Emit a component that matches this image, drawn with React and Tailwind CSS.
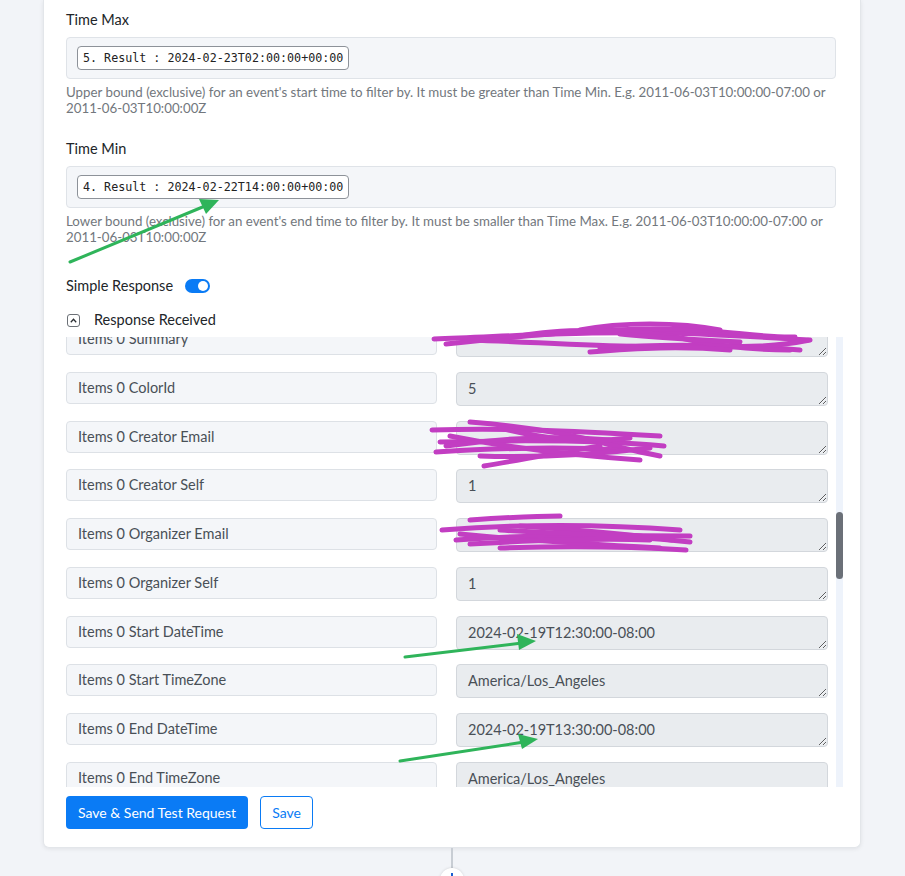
import React, { useLayoutEffect, useRef } from 'react';

const font = { fontFamily: 'Lato, "Noto Sans", sans-serif' };

const responseRows = [
    ['Items 0 Summary', ''],
    ['Items 0 ColorId', '5'],
    ['Items 0 Creator Email', ''],
    ['Items 0 Creator Self', '1'],
    ['Items 0 Organizer Email', ''],
    ['Items 0 Organizer Self', '1'],
    ['Items 0 Start DateTime', '2024-02-19T12:30:00-08:00'],
    ['Items 0 Start TimeZone', 'America/Los_Angeles'],
    ['Items 0 End DateTime', '2024-02-19T13:30:00-08:00'],
    ['Items 0 End TimeZone', 'America/Los_Angeles'],
    ['Items 0 ICalUID', ''],
    ['Items 0 Sequence', '0'],
];

function TimeField({ label, token, help, className = '' }) {
    return (
        <div className={className}>
            <div className="text-[14.5px] leading-5 text-[#212529]">{label}</div>
            <div className="mt-[7px] h-[42px] rounded border border-[#dfe3e8] bg-[#f4f6f9] pl-[10px] flex items-center">
                <span
                    className="h-[24px] px-[5px] rounded-[4px] border border-[#8d9299] bg-white text-[11.7px] leading-[22px] text-[#222]"
                    style={{ fontFamily: '"DejaVu Sans Mono", monospace' }}
                >
                    {token}
                </span>
            </div>
            <p className="mt-[5px] text-[13.3px] leading-4 text-[#72777d]">{help}</p>
        </div>
    );
}

function ResponseRow({ name, value }) {
    return (
        <div className="flex items-start gap-[19px]">
            <div className="w-[371px] h-[32px] shrink-0 rounded border border-[#dde1e6] bg-[#f4f6f9] pl-[11px] text-[14.5px] leading-[30px] text-[#495057]">
                {name}
            </div>
            <textarea
                readOnly
                rows={1}
                value={value}
                className="w-[372px] h-[34px] shrink-0 rounded border border-[#d3d7dc] bg-[#e9ecef] pl-[11px] pt-[6px] text-[14.5px] leading-5 text-[#495057] overflow-hidden outline-none"
                style={font}
            />
        </div>
    );
}

// hand-drawn markup laid over the form
function Annotations() {
    const green = '#2fb45a';
    const pink = '#c23ec2';
    return (
        <svg className="absolute inset-0 pointer-events-none" width="905" height="876" viewBox="0 0 905 876">
            <g stroke={green} strokeWidth="3" strokeLinecap="round" fill="none">
                <line x1="70" y1="262" x2="205" y2="206" />
                <line x1="405" y1="657" x2="522" y2="643" />
                <line x1="400" y1="761" x2="524" y2="742" />
            </g>
            <g fill={green}>
                <polygon points="219,200 199,199 206,214" />
                <polygon points="536,641 517,634 519,650" />
                <polygon points="538,739 518,734 522,749" />
            </g>
            <g stroke={pink} strokeWidth="5" strokeLinecap="round" strokeLinejoin="round" fill="none">
                <path d="M434 339 C520 336 600 330 700 334 C740 336 780 338 808 340" />
                <path d="M446 344 C540 334 620 326 700 330 C740 333 770 338 795 337" />
                <path d="M600 348 C660 344 720 344 800 350 M580 330 C620 322 680 322 720 330" />
                <path d="M470 340 C560 343 640 350 760 346 C780 345 800 342 810 340" />
                <path d="M520 336 C560 328 640 328 690 340 C720 346 760 350 790 350" />
                <path d="M590 352 C640 348 680 346 730 350 M620 334 C660 338 700 340 740 342" />
            </g>
            <g stroke={pink} strokeWidth="5" strokeLinecap="round" strokeLinejoin="round" fill="none">
                <path d="M432 430 C500 428 560 430 660 436 M440 442 C520 440 600 440 664 446" />
                <path d="M470 422 C520 426 560 432 600 442 C620 448 640 452 660 456" />
                <path d="M436 452 C500 448 560 446 620 450 M484 466 C520 460 560 452 600 446" />
                <path d="M450 436 C520 450 580 456 640 460 M500 428 C540 438 580 444 630 438" />
                <path d="M446 446 C500 438 560 436 610 440 M480 456 C540 458 600 454 650 448" />
            </g>
            <g stroke={pink} strokeWidth="5" strokeLinecap="round" strokeLinejoin="round" fill="none">
                <path d="M442 530 C520 524 600 524 680 530 M470 520 C500 518 530 516 560 516" />
                <path d="M456 540 C540 534 620 534 690 542 M500 548 C560 546 620 546 686 550" />
                <path d="M460 534 C520 540 580 544 660 548 M520 526 C580 530 630 534 672 540" />
                <path d="M470 544 C540 540 600 538 650 540 M500 530 C560 534 620 536 690 536" />
            </g>
        </svg>
    );
}

export default function App() {
    const listRef = useRef(null);

    useLayoutEffect(() => {
        if (listRef.current) listRef.current.scrollTop = 14;
    }, []);

    return (
        <div className="relative h-[876px] overflow-hidden bg-[#f2f4f8]" style={font}>
            <div className="ml-[43px] w-[818px] rounded-b-md border border-t-0 border-[#e3e6ea] bg-white shadow-[0_1px_4px_rgba(0,0,0,0.08)] pl-[22px] pr-[17px] pt-[10px] pb-[18px]">
                <div className="w-[770px]">
                    <TimeField
                        label="Time Max"
                        token="5. Result : 2024-02-23T02:00:00+00:00"
                        help="Upper bound (exclusive) for an event's start time to filter by. It must be greater than Time Min. E.g. 2011-06-03T10:00:00-07:00 or 2011-06-03T10:00:00Z"
                    />
                    <TimeField
                        className="mt-[23px]"
                        label="Time Min"
                        token="4. Result : 2024-02-22T14:00:00+00:00"
                        help="Lower bound (exclusive) for an event's end time to filter by. It must be smaller than Time Max. E.g. 2011-06-03T10:00:00-07:00 or 2011-06-03T10:00:00Z"
                    />

                    {/* Simple Response toggle */}
                    <div className="mt-[31px] flex items-center gap-[12px] text-[14.5px] leading-5 text-[#212529]">
                        <span>Simple Response</span>
                        <span className="w-[25px] h-[14px] rounded-full bg-[#0a7bf5] flex items-center justify-end pr-[2px]">
                            <span className="w-[10px] h-[10px] rounded-full bg-white" />
                        </span>
                    </div>

                    {/* Response Received header */}
                    <div className="mt-[14px] flex items-center gap-[14px] text-[14.5px] leading-5 text-[#212529]">
                        <span className="ml-px w-[13px] h-[13px] rounded-[3px] border border-[#6b7076] flex items-center justify-center">
                            <svg width="7" height="5" viewBox="0 0 7 5" fill="none">
                                <path d="M0.8 4.2 L3.5 1.3 L6.2 4.2" stroke="#2b2f33" strokeWidth="1.3" />
                            </svg>
                        </span>
                        <span>Response Received</span>
                    </div>
                </div>

                {/* Response fields with scrollbar */}
                <div className="mt-[7px] flex gap-[8px] w-[777px]">
                    <div ref={listRef} className="w-[762px] h-[450px] overflow-hidden flex flex-col gap-[14.75px]">
                        {responseRows.map(([name, value]) => (
                            <ResponseRow key={name} name={name} value={value} />
                        ))}
                    </div>
                    <div className="w-[7px] h-[450px] bg-[#eef3fb]">
                        <div className="mt-[175px] h-[67px] w-[7px] rounded-full bg-[#6b7078]" />
                    </div>
                </div>

                <div className="mt-[9px] flex items-center gap-[12px]">
                    <button className="h-[33px] px-[12px] rounded bg-[#0a7bf5] text-white text-[14px]">
                        Save &amp; Send Test Request
                    </button>
                    <button className="h-[33px] w-[53px] rounded border border-[#0a7bf5] bg-white text-[#0a7bf5] text-[14px]">
                        Save
                    </button>
                </div>
            </div>

            {/* connector to next step */}
            <div className="ml-[451px] w-[2px] h-[20px] bg-[#c8cdd4]" />
            <div className="ml-[440px] w-[24px] h-[24px] rounded-full bg-white shadow-[0_0_3px_rgba(0,0,0,0.15)] flex justify-center pt-[5px]">
                <span className="w-[2px] h-[8px] bg-[#1a5fd0]" />
            </div>

            <Annotations />
        </div>
    );
}
